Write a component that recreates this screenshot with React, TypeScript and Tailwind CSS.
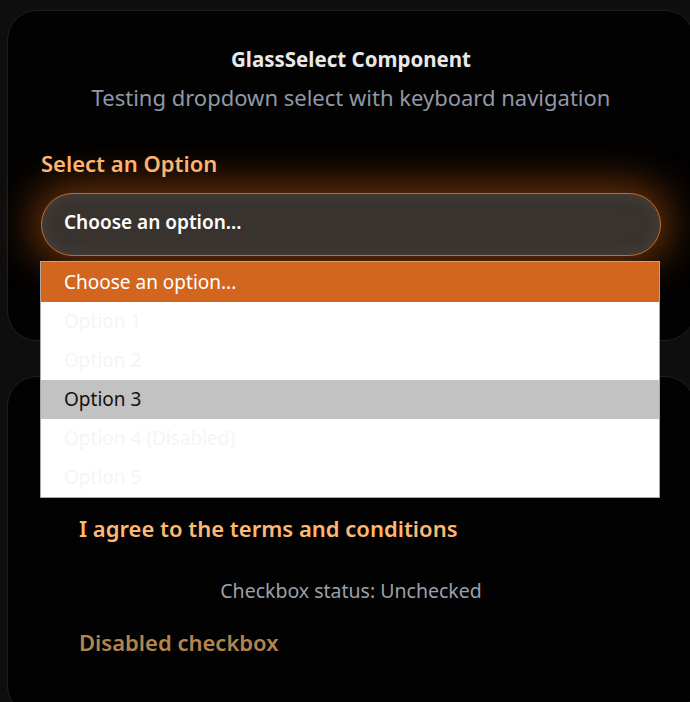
export default function App() {
  const options = [
    { label: "Choose an option...", state: "selected" },
    { label: "Option 1", state: "faint" },
    { label: "Option 2", state: "faint" },
    { label: "Option 3", state: "hover" },
    { label: "Option 4 (Disabled)", state: "faint" },
    { label: "Option 5", state: "faint" },
  ];

  return (
    <div
      className="relative w-[690px] h-[702px] overflow-hidden bg-[#0e0e0e]"
      style={{ fontFamily: '"Noto Sans", "Open Sans", sans-serif' }}
    >
      <div className="flex flex-col gap-[35px] pt-[10px] pl-[7px]">
        {/* Select card */}
        <div className="w-[688px] h-[331px] shrink-0 rounded-[30px] border border-[#1f1f1f] bg-[#020202] px-[33px] pt-[34px]">
          <h2 className="text-center text-[20.5px] leading-7 font-bold text-[#e8e8e8]">GlassSelect Component</h2>
          <p className="mt-[10px] text-center text-[22px] leading-7 text-[#9098a6]">
            Testing dropdown select with keyboard navigation
          </p>
          <label className="mt-[38px] block text-[22px] leading-7 font-semibold text-[#fdb46e]">Select an Option</label>
          <div className="mt-[16px] flex h-[63px] items-center rounded-full border-[1.5px] border-[#c96a2b] bg-[#38332f] px-[22px] pb-[5px] shadow-[0_0_40px_10px_rgba(234,108,20,0.45),inset_0_0_18px_rgba(255,220,190,0.08)]">
            <span className="text-[19px] font-semibold text-white">Choose an option...</span>
          </div>
        </div>

        {/* Checkbox card */}
        <div className="w-[688px] h-[340px] shrink-0 rounded-[30px] border border-[#1f1f1f] bg-[#020202] px-[33px] pt-[34px]">
          <h2 className="text-center text-[20.5px] leading-7 font-bold text-[#e8e8e8]">GlassCheckbox Component</h2>
          <p className="mt-[10px] text-center text-[22px] leading-7 text-[#9098a6]">Testing checkbox with toggle states</p>
          <div className="mt-[37px] flex items-center gap-[14px]">
            <span className="h-6 w-6 rounded-md bg-[#030303]" />
            <span className="text-[22px] leading-7 font-semibold text-[#fdb872]">I agree to the terms and conditions</span>
          </div>
          <p className="mt-[36px] text-center text-[19.5px] leading-[26px] text-[#9aa1ad]">Checkbox status: Unchecked</p>
          <div className="mt-[24px] flex items-center gap-[14px]">
            <span className="h-6 w-6 rounded-md bg-[#030303]" />
            <span className="text-[22px] leading-7 font-semibold text-[#b4844f]">Disabled checkbox</span>
          </div>
        </div>
      </div>

      {/* open native dropdown list */}
      <div className="absolute left-[40px] top-[261px] w-[620px] border border-[#a8a8a8] bg-white">
        {options.map((o, i) => (
          <div
            key={o.label}
            className={
              (i === 0 ? "h-[40px] " : "h-[39px] ") +
              (o.state === "selected"
                ? "flex items-center bg-[#d3661f] px-[23px] text-[19px] text-white"
                : o.state === "hover"
                ? "flex items-center bg-[#c2c2c2] px-[23px] text-[19px] text-[#111]"
                : "flex items-center bg-white px-[23px] text-[19px] text-[#f5f5f5]")
            }
          >
            {o.label}
          </div>
        ))}
      </div>
    </div>
  );
}
